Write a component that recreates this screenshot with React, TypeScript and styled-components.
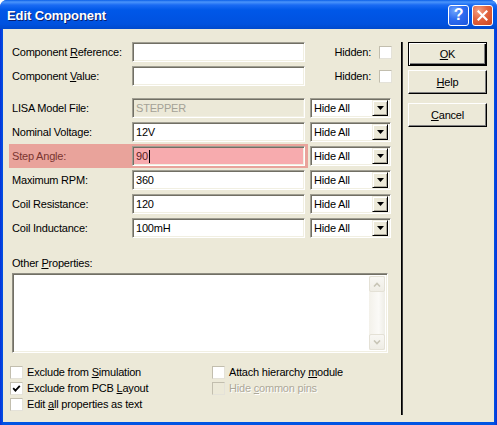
import React from "react";
import styled, { createGlobalStyle } from "styled-components";

const Global = createGlobalStyle`
  html, body { margin: 0; padding: 0; background: #ffffff; }
  body {
    font-family: "Liberation Sans", Arial, sans-serif;
    font-size: 11px;
    letter-spacing: -0.2px;
    color: #000;
  }
  * { box-sizing: border-box; }
`;

const Window = styled.div`
  width: 497px;
  height: 425px;
  display: flex;
  flex-direction: column;
  background: linear-gradient(90deg, #0831d9 0%, #0054e3 3px, #0054e3 494px, #0831d9 100%);
  border-radius: 7px 7px 0 0;
  overflow: hidden;
`;

const TitleBar = styled.div`
  height: 29px;
  flex: none;
  display: flex;
  align-items: center;
  padding: 0 4px 0 7px;
  background: linear-gradient(
    180deg,
    #0a5fe8 0%,
    #4b95fb 2px,
    #1a6bf3 5px,
    #0058e8 10px,
    #0054e3 18px,
    #0052df 24px,
    #0049cc 29px
  );
`;

const TitleText = styled.div`
  flex: 1;
  color: #fff;
  font-family: "Liberation Sans", Arial, sans-serif;
  font-weight: bold;
  font-size: 13px;
  letter-spacing: -0.1px;
  text-shadow: 1px 1px #0a1e6a;
  padding-top: 1px;
`;

const CaptionButtons = styled.div`
  display: flex;
  gap: 3px;
  padding-top: 1px;
`;

const CaptionButton = styled.div<{ $kind: "help" | "close" }>`
  width: 21px;
  height: 21px;
  border: 1px solid #fff;
  border-radius: 3px;
  display: flex;
  align-items: center;
  justify-content: center;
  color: #fff;
  font-family: "Liberation Sans", Arial, sans-serif;
  font-weight: bold;
  font-size: 16px;
  background: ${(p) =>
    p.$kind === "help"
      ? "radial-gradient(circle at 30% 25%, #6fa4fb 0%, #2d6cf0 45%, #1a55de 100%)"
      : "radial-gradient(circle at 30% 25%, #f5a184 0%, #e2643f 45%, #cc4520 100%)"};
`;

const Client = styled.div`
  flex: 1;
  margin: 0 3px 3px 3px;
  background: #ece9d8;
  display: flex;
`;

const MainPanel = styled.div`
  width: 398px;
  flex: none;
  padding: 11px 0 0 6px;
  display: flex;
  flex-direction: column;
`;

const FieldRow = styled.div<{ $gapAbove?: number }>`
  height: 24px;
  display: flex;
  align-items: center;
  margin-top: ${(p) => p.$gapAbove ?? 0}px;
`;

const FieldGroup = styled.div<{ $highlight?: boolean }>`
  width: 299px;
  height: 24px;
  padding: 0 3px;
  display: flex;
  align-items: center;
  background: ${(p) => (p.$highlight ? "#e9a39b" : "transparent")};
`;

const FieldLabel = styled.div<{ $highlight?: boolean }>`
  width: 120px;
  flex: none;
  color: ${(p) => (p.$highlight ? "#7a3530" : "#000")};
`;

const TextBox = styled.div<{ $disabled?: boolean; $highlight?: boolean }>`
  width: 173px;
  height: 20px;
  display: flex;
  align-items: center;
  padding: 0 3px;
  border: 1px solid;
  border-color: #a09e92 #fff #fff #a09e92;
  box-shadow: inset 1px 1px #716f64, inset -1px -1px #f1efe2;
  background: ${(p) => (p.$highlight ? "#f7abae" : p.$disabled ? "#ece9d8" : "#fff")};
  color: ${(p) => (p.$disabled ? "#a4a196" : p.$highlight ? "#5a2020" : "#000")};
  white-space: nowrap;
`;

const Caret = styled.span`
  display: inline-block;
  width: 1px;
  height: 13px;
  background: #000;
  margin-left: 1px;
`;

const HiddenGroup = styled.div`
  width: 84px;
  display: flex;
  justify-content: flex-end;
  align-items: center;
  gap: 8px;
`;

const Dropdown = styled.div`
  width: 81px;
  height: 20px;
  margin-left: 2px;
  display: flex;
  align-items: center;
  border: 1px solid;
  border-color: #a09e92 #fff #fff #a09e92;
  box-shadow: inset 1px 1px #716f64, inset -1px -1px #f1efe2;
  background: #fff;
  padding: 2px 2px 2px 3px;
`;

const DropText = styled.div`
  flex: 1;
`;

const DropButton = styled.div`
  width: 16px;
  height: 16px;
  background: #ece9d8;
  border: 1px solid;
  border-color: #f1efe2 #000 #000 #f1efe2;
  box-shadow: inset 1px 1px #fff, inset -1px -1px #aca899;
  display: flex;
  align-items: center;
  justify-content: center;
`;

const OtherLabel = styled.div`
  margin: 17px 0 0 3px;
  height: 13px;
  line-height: 13px;
`;

const MemoBox = styled.div`
  width: 376px;
  height: 80px;
  margin: 3px 0 0 3px;
  border: 1px solid;
  border-color: #8f8d82 #fff #fff #8f8d82;
  box-shadow: inset 1px 1px #716f64, inset -1px -1px #f1efe2;
  background: #fff;
  display: flex;
  padding: 2px 2px 2px 2px;
`;

const MemoBody = styled.div`
  flex: 1;
`;

const ScrollBar = styled.div`
  width: 16px;
  display: flex;
  flex-direction: column;
  justify-content: space-between;
  background: linear-gradient(90deg, #f3f1ea, #fbfaf7 60%, #eeede6);
`;

const ScrollButton = styled.div`
  width: 16px;
  height: 16px;
  border: 1px solid #e4e1d6;
  border-radius: 2px;
  background: linear-gradient(180deg, #f8f7f3, #efede5);
  display: flex;
  align-items: center;
  justify-content: center;
`;

const CheckArea = styled.div`
  margin: 11px 0 0 1px;
  display: grid;
  grid-template-columns: 202px 1fr;
`;

const CheckColumn = styled.div`
  display: flex;
  flex-direction: column;
`;

const CheckRow = styled.div<{ $disabled?: boolean }>`
  height: 16px;
  display: flex;
  align-items: center;
  gap: 4px;
  color: ${(p) => (p.$disabled ? "#aca899" : "#000")};
  text-shadow: ${(p) => (p.$disabled ? "1px 1px #fff" : "none")};
`;

const CheckBox = styled.div<{ $disabled?: boolean }>`
  width: 13px;
  height: 13px;
  flex: none;
  border: 1px solid;
  border-color: #c2beae #e4e2d9 #e4e2d9 #c2beae;
  background: ${(p) => (p.$disabled ? "#ece9d8" : "#fff")};
  display: flex;
  align-items: center;
  justify-content: center;
`;

const Separator = styled.div`
  width: 2px;
  flex: none;
  margin: 13px 0 7px 0;
  border-left: 1px solid #000;
  border-right: 1px solid #3a3a3a;
`;

const ButtonColumn = styled.div`
  display: flex;
  flex-direction: column;
  padding: 13px 0 0 5px;
`;

const PushButton = styled.div<{ $default?: boolean; $gapAbove?: number }>`
  width: 79px;
  height: 24px;
  margin-top: ${(p) => p.$gapAbove ?? 0}px;
  display: flex;
  align-items: center;
  justify-content: center;
  background: #ece9d8;
  border: 1px solid;
  border-color: ${(p) => (p.$default ? "#000" : "#fff #000 #000 #fff")};
  box-shadow: ${(p) =>
    p.$default
      ? "inset 1px 1px #fff, inset -1px -1px #000, inset -2px -2px #808080"
      : "inset -1px -1px #808080"};
`;

const Key = styled.span`
  text-decoration: underline;
  text-underline-offset: 1px;
`;

const DownArrow = () => (
  <svg width="7" height="4" viewBox="0 0 7 4">
    <polygon points="0,0 7,0 3.5,4" fill="#000" />
  </svg>
);

const Chevron = ({ up }: { up?: boolean }) => (
  <svg width="8" height="5" viewBox="0 0 8 5">
    <polyline
      points={up ? "1,4.5 4,1.5 7,4.5" : "1,0.5 4,3.5 7,0.5"}
      fill="none"
      stroke="#c8c5b6"
      strokeWidth="1.6"
    />
  </svg>
);

const CheckMark = () => (
  <svg width="9" height="9" viewBox="0 0 9 9">
    <polyline points="1.2,4.2 3.4,6.6 7.8,1.8" fill="none" stroke="#000" strokeWidth="1.8" />
  </svg>
);

const CloseGlyph = () => (
  <svg width="11" height="11" viewBox="0 0 11 11">
    <path d="M1.5 1.5 L9.5 9.5 M9.5 1.5 L1.5 9.5" stroke="#fff" strokeWidth="2.2" strokeLinecap="square" />
  </svg>
);

type Field = { label: string; value: string; disabled?: boolean; highlight?: boolean };

const fields: Field[] = [
  { label: "LISA Model File:", value: "STEPPER", disabled: true },
  { label: "Nominal Voltage:", value: "12V" },
  { label: "Step Angle:", value: "90", highlight: true },
  { label: "Maximum RPM:", value: "360" },
  { label: "Coil Resistance:", value: "120" },
  { label: "Coil Inductance:", value: "100mH" },
];

export default function App() {
  return (
    <>
      <Global />
      <Window>
        <TitleBar>
          <TitleText>Edit Component</TitleText>
          <CaptionButtons>
            <CaptionButton $kind="help">?</CaptionButton>
            <CaptionButton $kind="close">
              <CloseGlyph />
            </CaptionButton>
          </CaptionButtons>
        </TitleBar>
        <Client>
          <MainPanel>
            <FieldRow>
              <FieldGroup>
                <FieldLabel>
                  Component <Key>R</Key>eference:
                </FieldLabel>
                <TextBox />
              </FieldGroup>
              <HiddenGroup>
                <span>Hidden:</span>
                <CheckBox />
              </HiddenGroup>
            </FieldRow>
            <FieldRow>
              <FieldGroup>
                <FieldLabel>
                  Component <Key>V</Key>alue:
                </FieldLabel>
                <TextBox />
              </FieldGroup>
              <HiddenGroup>
                <span>Hidden:</span>
                <CheckBox />
              </HiddenGroup>
            </FieldRow>
            {fields.map((f, i) => (
              <FieldRow key={f.label} $gapAbove={i === 0 ? 8 : 0}>
                <FieldGroup $highlight={f.highlight}>
                  <FieldLabel $highlight={f.highlight}>{f.label}</FieldLabel>
                  <TextBox $disabled={f.disabled} $highlight={f.highlight}>
                    {f.value}
                    {f.highlight && <Caret />}
                  </TextBox>
                </FieldGroup>
                <Dropdown>
                  <DropText>Hide All</DropText>
                  <DropButton>
                    <DownArrow />
                  </DropButton>
                </Dropdown>
              </FieldRow>
            ))}
            <OtherLabel>
              Other <Key>P</Key>roperties:
            </OtherLabel>
            <MemoBox>
              <MemoBody />
              <ScrollBar>
                <ScrollButton>
                  <Chevron up />
                </ScrollButton>
                <ScrollButton>
                  <Chevron />
                </ScrollButton>
              </ScrollBar>
            </MemoBox>
            <CheckArea>
              <CheckColumn>
                <CheckRow>
                  <CheckBox />
                  <span>
                    Exclude from <Key>S</Key>imulation
                  </span>
                </CheckRow>
                <CheckRow>
                  <CheckBox>
                    <CheckMark />
                  </CheckBox>
                  <span>
                    Exclude from PCB <Key>L</Key>ayout
                  </span>
                </CheckRow>
                <CheckRow>
                  <CheckBox />
                  <span>
                    Edit <Key>a</Key>ll properties as text
                  </span>
                </CheckRow>
              </CheckColumn>
              <CheckColumn>
                <CheckRow>
                  <CheckBox />
                  <span>
                    Attach hierarchy <Key>m</Key>odule
                  </span>
                </CheckRow>
                <CheckRow $disabled>
                  <CheckBox $disabled />
                  <span>
                    Hide <Key>c</Key>ommon pins
                  </span>
                </CheckRow>
              </CheckColumn>
            </CheckArea>
          </MainPanel>
          <Separator />
          <ButtonColumn>
            <PushButton $default>
              <Key>O</Key>K
            </PushButton>
            <PushButton $gapAbove={4}>
              <Key>H</Key>elp
            </PushButton>
            <PushButton $gapAbove={9}>
              <Key>C</Key>ancel
            </PushButton>
          </ButtonColumn>
        </Client>
      </Window>
    </>
  );
}
